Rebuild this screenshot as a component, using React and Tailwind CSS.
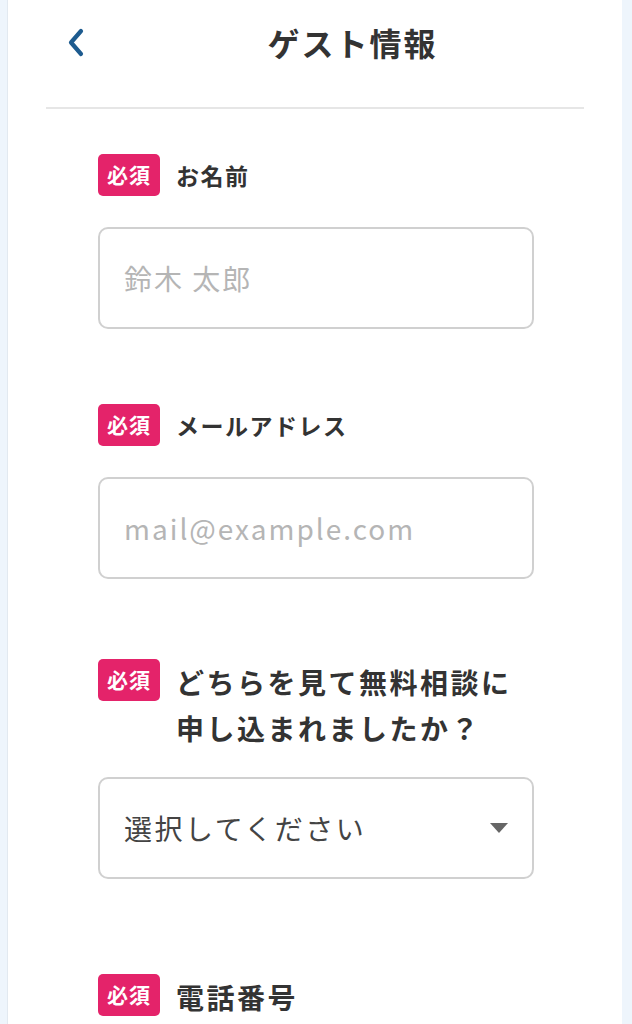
import React from 'react';

const font = { fontFamily: '"Noto Sans CJK JP", "Noto Sans", sans-serif' };

function Required() {
    return (
        <span className="flex h-[42px] w-[62px] shrink-0 items-center justify-center rounded-[5px] bg-[#e4236a] text-[21px] font-bold tracking-[1px] text-white">
            必須
        </span>
    );
}

function FieldLabel({ children, large }) {
    return (
        <div className="flex items-start gap-[16px]">
            <Required />
            <span
                className={
                    large
                        ? 'text-[28px] font-bold leading-[46px] tracking-[2.5px] text-[#333]'
                        : 'text-[23px] font-bold leading-[42px] tracking-[1.5px] text-[#333]'
                }
            >
                {children}
            </span>
        </div>
    );
}

function TextField({ placeholder }) {
    return (
        <input
            type="text"
            placeholder={placeholder}
            className="mt-[31px] h-[102px] w-full rounded-[10px] border-2 border-[#d0d0d0] bg-white px-[24px] text-[28px] tracking-[2px] text-[#333] outline-none placeholder:text-[#b5b5b5]"
        />
    );
}

export default function App() {
    return (
        <div className="min-h-screen bg-[#eef5fc]" style={font}>
            <div className="ml-[7px] min-h-screen w-[615px] border-l border-[#e2e9f0] bg-white">
                {/* Header */}
                <div className="mx-[38px] h-[109px] border-b-2 border-[#e6e6e6]">
                    <div className="flex h-[84px] items-center">
                        <button className="flex h-full w-[75px] items-center pl-[20px]">
                            <svg width="19" height="29" viewBox="0 0 19 29" fill="none">
                                <path d="M15 3 L5 14.5 L15 26" stroke="#1d5b8f" strokeWidth="4.2" strokeLinecap="round" strokeLinejoin="round" />
                            </svg>
                        </button>
                        <h1 className="flex-1 text-center text-[32px] font-bold tracking-[2px] text-[#333]">ゲスト情報</h1>
                    </div>
                </div>

                {/* Form */}
                <div className="pl-[90px] pr-[88px] pt-[45px]">
                    <div>
                        <FieldLabel>お名前</FieldLabel>
                        <TextField placeholder="鈴木 太郎" />
                    </div>

                    <div className="mt-[75px]">
                        <FieldLabel>メールアドレス</FieldLabel>
                        <TextField placeholder="mail@example.com" />
                    </div>

                    <div className="mt-[80px]">
                        <FieldLabel large>どちらを見て無料相談に申し込まれましたか？</FieldLabel>
                        <div className="mt-[26px] flex h-[102px] w-full items-center justify-between rounded-[10px] border-2 border-[#d0d0d0] bg-white pl-[24px] pr-[24px]">
                            <span className="text-[28px] tracking-[2.5px] text-[#444]">選択してください</span>
                            <svg width="18" height="10" viewBox="0 0 18 10">
                                <path d="M0 0 H18 L9 10 Z" fill="#666" />
                            </svg>
                        </div>
                    </div>

                    <div className="mt-[95px] pb-[40px]">
                        <FieldLabel large>電話番号</FieldLabel>
                    </div>
                </div>
            </div>
        </div>
    );
}
